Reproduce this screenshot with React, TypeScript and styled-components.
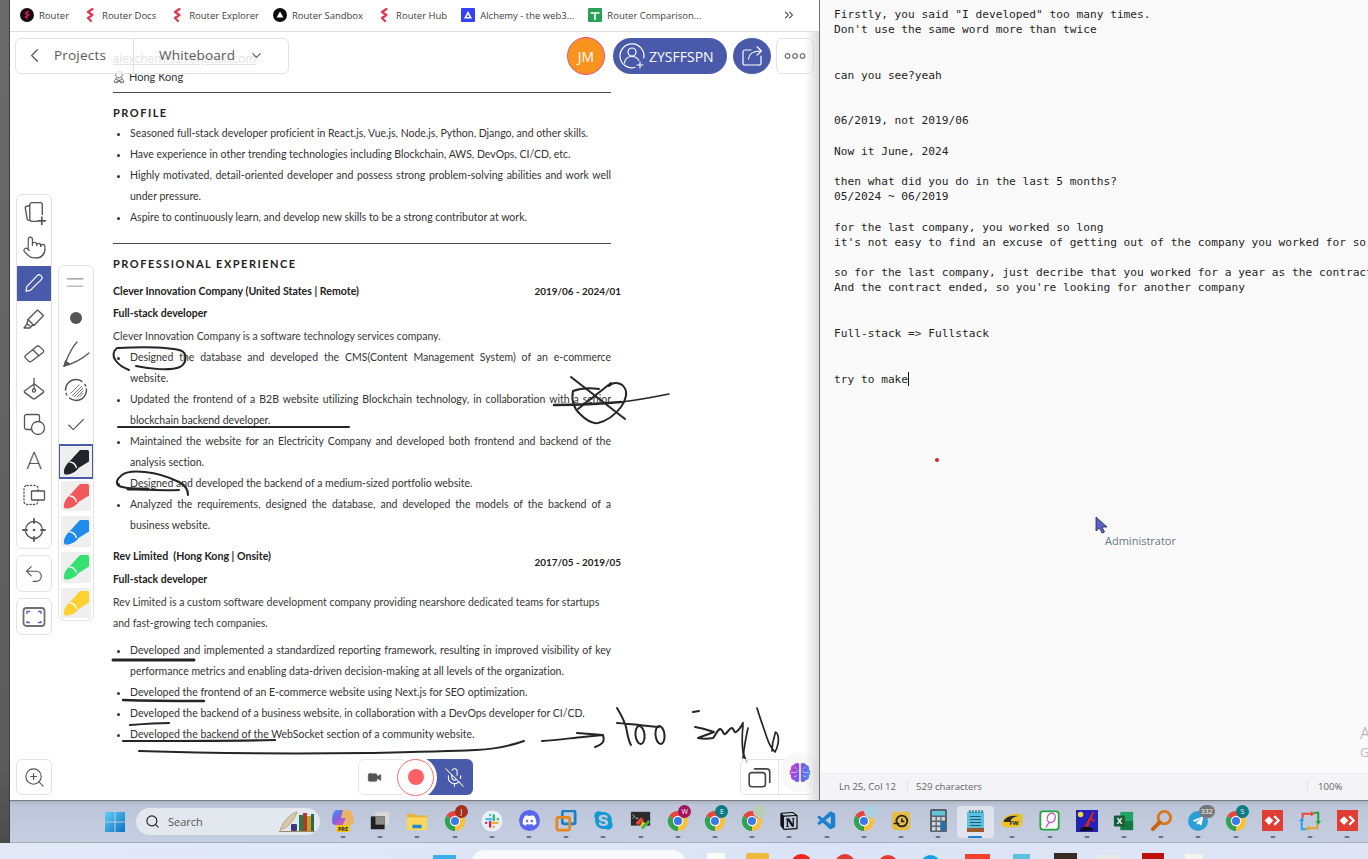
import React from 'react';
import styled, { createGlobalStyle } from 'styled-components';
import { ChevronLeft, ChevronDown, Pointer, Undo2, ZoomIn, Check, Search as SearchGlyph, ChevronsRight, Video, MicOff } from 'lucide-react';
import { FaDiscord, FaSkype, FaTelegramPlane } from 'react-icons/fa';
import { SiNotion } from 'react-icons/si';
import { VscVscode } from 'react-icons/vsc';

const Global = createGlobalStyle`
  html, body { margin: 0; padding: 0; width: 1368px; height: 859px; overflow: hidden; background: #dfe7f6; }
  * { box-sizing: border-box; }
`;

const Page = styled.div`
  width: 1368px; height: 859px; display: flex; flex-direction: column; overflow: hidden;
  font-family: 'Open Sans', 'Liberation Sans', sans-serif;
`;
const Desk = styled.div`display: flex; height: 843px;`;
const SideStrip = styled.div`
  width: 10px; background: linear-gradient(180deg, #6a6a6a, #5c5c5c 90%, #4c4c4c);
  border-right: 1px solid #3d3d3d;
`;
const DeskMain = styled.div`flex: 1; display: flex; flex-direction: column; min-width: 0;`;
const Windows = styled.div`display: flex; height: 801px; border-bottom: 1.5px solid #7b7b7b;`;

/* browser */
const Browser = styled.div`width: 810px; display: flex; flex-direction: column; background: #fff; border-right: 1px solid #6f6f6f;`;
const Bookmarks = styled.div`
  height: 32px; display: flex; align-items: center; gap: 14px; padding: 0 23px 1px 10px;
  border-bottom: 1px solid #dcdcdc; background: #fff; flex: none;
`;
const Bookmark = styled.div`
  display: flex; align-items: center; gap: 5px; font-size: 9.5px; color: #3d3d3d; white-space: nowrap;
`;
const BookmarkOverflow = styled.div`margin-left: auto; display: flex; color: #333;`;

const Canvas = styled.div`
  position: relative; flex: 1; overflow: hidden; background: #fff;
  &::after {
    content: ''; position: absolute; right: 0; top: 0; bottom: 0; width: 14px;
    background: linear-gradient(90deg, rgba(180,180,180,0), rgba(170,170,170,.42));
    pointer-events: none;
  }
`;
const Doc = styled.div`
  width: 508px; margin-left: 103px; padding-top: 18px; color: #2f2f2f;
  font-family: Lato, 'Liberation Sans', sans-serif; font-size: 10.5px; font-variant-ligatures: none;
`;
const ContactLink = styled.div`height: 18px; line-height: 18px; color: #6b7280; text-decoration: underline; font-size: 12.5px;`;
const ContactPlace = styled.div`height: 18px; line-height: 18px; display: flex; align-items: center; gap: 4px; font-size: 11px; color: #333; svg { flex: none; }`;
const Rule = styled.div<{ $top: number }>`width: 498px; height: 1px; background: #4c4c4c; margin-top: ${p => p.$top}px;`;
const Heading = styled.div<{ $top: number }>`
  height: 20px; line-height: 20px; margin-top: ${p => p.$top}px; font-weight: 700; font-size: 11px;
  letter-spacing: 1.5px; color: #222;
`;
const JobRow = styled.div<{ $top: number }>`
  display: flex; justify-content: space-between; height: 20px; line-height: 20px; margin-top: ${p => p.$top}px;
  font-weight: 700; color: #222; font-size: 10.6px;
`;
const JobDate = styled.span<{ $drop?: number }>`margin-top: ${p => p.$drop || 0}px; font-size: 9.9px;`;
const Role = styled.div<{ $top: number }>`height: 20px; line-height: 20px; margin-top: ${p => p.$top}px; font-weight: 700; color: #222;`;
const Para = styled.p<{ $top: number }>`margin: ${p => p.$top}px 0 0; width: 498px; line-height: 21px; color: #3a3a3a;`;
const Bullets = styled.ul<{ $top?: number }>`
  margin: ${p => p.$top || 0}px 0 0; padding: 0 0 0 17px; width: 498px; color: #333;
`;
const Bullet = styled.li`line-height: 21px; text-align: justify;`;

const InkLayer = styled.svg`position: absolute; left: 0; top: 0; width: 809px; height: 768px; pointer-events: none;`;

const NavGroup = styled.div`
  position: absolute; left: 5px; top: 6px; width: 274px; height: 36px; display: flex; align-items: center;
  background: rgba(255,255,255,.8); border: 1px solid #e3e3e3; border-radius: 6px; font-size: 13.5px; color: #5a5a5a;
`;
const NavBack = styled.div`width: 118px; height: 100%; display: flex; align-items: center; gap: 8px; padding: 0 0 2px 7px; border-right: 1px solid #dfdfdf; letter-spacing: .2px;`;
const NavBoard = styled.div`flex: 1; display: flex; align-items: center; gap: 14px; padding: 0 0 2px 25px; letter-spacing: .2px;`;

const TopRight = styled.div`position: absolute; right: 5px; top: 6px; display: flex; align-items: center; height: 36px;`;
const Avatar = styled.div`
  width: 38px; height: 38px; border-radius: 50%; background: #f7931e; border: 1.5px solid #ee4b72; color: #fff;
  display: flex; align-items: center; justify-content: center; font-size: 14px; margin-right: 8px;
`;
const InviteButton = styled.div`
  width: 114px; height: 36px; border-radius: 18px; background: #4a5aab; color: #fff; display: flex; align-items: center;
  gap: 3px; padding-left: 5px; font-size: 14px; font-weight: 500; margin-right: 6px;
`;
const ShareButton = styled.div`
  width: 38px; height: 36px; border-radius: 50%; background: #4a5aab; display: flex; align-items: center; justify-content: center; margin-right: 5px;
`;
const MoreButton = styled.div`
  width: 38px; height: 36px; border-radius: 6px; background: #fff; border: 1px solid #e3e3e3; display: flex; align-items: center; justify-content: center;
`;

const ToolColumn = styled.div`position: absolute; left: 6px; top: 162px; width: 36px; display: flex; flex-direction: column; gap: 6px;`;
const Panel = styled.div`
  display: flex; flex-direction: column; background: #fff; border: 1px solid #e3e3e3; border-radius: 6px; overflow: hidden;
`;
const ToolSlot = styled.div<{ $h?: number; $active?: boolean }>`
  height: ${p => p.$h || 35.3}px; flex: none; display: flex; align-items: center; justify-content: center;
  background: ${p => (p.$active ? '#4a5aab' : 'transparent')}; color: #555;
`;
const ToolLetter = styled.span`font-family: Lato, 'Liberation Sans', sans-serif; font-size: 24px; font-weight: 300; color: #555; line-height: 1;`;

const PenPanel = styled(Panel)`position: absolute; left: 48px; top: 233px; width: 36px; height: 356px; align-items: center;`;
const MarkerSlot = styled.div<{ $selected?: boolean }>`
  width: ${p => (p.$selected ? 36 : 30)}px; height: ${p => (p.$selected ? 35 : 30.5)}px; flex: none;
  margin: ${p => (p.$selected ? '1px 0 -3.5px' : '5.2px 0 0')}; background: #efefef; border-radius: 2px;
  border: ${p => (p.$selected ? '2px solid #4a5aab' : 'none')};
  display: flex; align-items: center; justify-content: center;
`;

const ZoomBox = styled(Panel)`
  position: absolute; left: 6px; top: 727px; width: 36px; height: 36px; align-items: center; justify-content: center; color: #555;
`;
const Recorder = styled.div`
  position: absolute; left: 348px; top: 727px; width: 115px; height: 36px; background: #fff; border: 1px solid #e8e8e8; border-radius: 6px;
  display: flex; align-items: center;
`;
const RecCam = styled.div`width: 31px; display: flex; justify-content: center; color: #555;`;
const RecButton = styled.div`
  margin-left: 7px; width: 37px; height: 37px; border-radius: 50%; border: 1.5px solid #f06f72; background: #fff; flex: none; z-index: 1;
  display: flex; align-items: center; justify-content: center; box-shadow: 0 0 0 3px #fff;
  &::after { content: ''; width: 16px; height: 16px; border-radius: 50%; background: #ff6166; }
`;
const RecMic = styled.div`
  flex: 1; height: calc(100% + 2px); margin: 0 -1px 0 -12px; padding-left: 14px; background: #4a5aab; border-radius: 0 6px 6px 0;
  display: flex; align-items: center; justify-content: center; color: #fff;
`;
const CornerBox = styled.div`
  position: absolute; left: 730px; top: 727px; width: 75px; height: 36px; border: 1px solid #e4e4e4; border-radius: 6px; background: rgba(255,255,255,.7);
  display: flex; align-items: center;
`;
const CornerWindows = styled.div`width: 38px; height: 100%; display: flex; align-items: center; justify-content: center; border-right: 1px solid #e4e4e4;`;
const BrainBubble = styled.div`
  position: absolute; left: 770px; top: 720px; width: 40px; height: 40px; border-radius: 50%; background: rgba(248,248,248,.95);
  display: flex; align-items: center; justify-content: center;
`;

/* notepad */
const Notepad = styled.div`flex: 1; position: relative; display: flex; flex-direction: column; background: #fafafa; min-width: 0; overflow: hidden;`;
const NoteText = styled.pre`
  flex: 1; margin: 0; padding: 7px 0 0 14px; font-family: 'DejaVu Sans Mono', 'Liberation Mono', monospace; font-size: 11.2px;
  line-height: 15.18px; color: #1f1f1f; white-space: pre; overflow: hidden;
`;
const Caret = styled.span`display: inline-block; width: 1px; height: 14px; background: #111; vertical-align: -3px;`;
const StatusBar = styled.div`
  height: 27px; flex: none; background: #f3f3f8; border-top: 1px solid #ececf0; display: flex; align-items: center; font-size: 9.6px; color: #666;
`;
const StatusCell = styled.div<{ $w: number; $pad: number; $grow?: boolean }>`
  width: ${p => p.$w}px; flex: ${p => (p.$grow ? 1 : 'none')}; padding-left: ${p => p.$pad}px; height: 14px; line-height: 14px;
  border-right: ${p => (p.$grow || p.$pad === 19 ? '1px solid #e2e2e8' : 'none')};
`;
const RemoteCursor = styled.div`position: absolute; left: 275px; top: 516px;`;
const RemoteLabel = styled.div`position: absolute; left: 285px; top: 533px; font-size: 11px; color: #667788;`;
const LaserDot = styled.div`position: absolute; left: 115px; top: 458px; width: 4px; height: 4px; border-radius: 50%; background: #e11d2a;`;
const Watermark = styled.div<{ $top: number; $size: number }>`position: absolute; left: 540px; top: ${p => p.$top}px; font-size: ${p => p.$size}px; color: #bdbdbd;`;

/* taskbar */
const Taskbar = styled.div`
  flex: 1; display: flex; align-items: center; padding-left: 95px; border-bottom: 1px solid #a6aebd;
  background: linear-gradient(180deg, #a9b3c4 0, #bcc6d8 10%, #c6cfe2 100%);
`;
const StartButton = styled.div`width: 20px; height: 20px; margin-right: 11px; display: flex;`;
const SearchBox = styled.div`
  position: relative; width: 184px; height: 27px; border-radius: 14px; background: #e3e7ee; display: flex; align-items: center; gap: 8px; padding-left: 9px;
  font-size: 11px; color: #555; margin-right: 4.5px; flex: none;
`;
const SearchArt = styled.div`position: absolute; right: 5px; top: 2px; display: flex;`;
const Slots = styled.div`display: flex;`;
const Slot = styled.div<{ $active?: boolean }>`
  position: relative; width: 37.2px; height: 32px; flex: none; display: flex; align-items: center; justify-content: center; border-radius: 4px; padding-bottom: 2px;
  background: ${p => (p.$active ? 'rgba(235,238,245,.7)' : 'transparent')};
  &::after {
    content: ''; position: absolute; bottom: 0; left: 50%; height: 2px; border-radius: 1px;
    width: ${p => (p.$active ? 14 : 5)}px; transform: translateX(-50%);
    background: ${p => (p.$active ? '#1f7fd1' : '#6d7480')};
  }
`;
const Badge = styled.div<{ $bg: string; $w?: number }>`
  position: absolute; left: 19px; top: -1px; min-width: ${p => p.$w || 13}px; height: 13px; border-radius: 7px; background: ${p => p.$bg};
  font-size: 7px; line-height: 13px; text-align: center; color: #fff; font-family: 'Open Sans', sans-serif;
`;
const RoundIcon = styled.span<{ $bg: string; $s: number }>`
  width: ${p => p.$s}px; height: ${p => p.$s}px; border-radius: 50%; background: ${p => p.$bg};
  display: flex; align-items: center; justify-content: center;
`;

/* second screen */
const SecondScreen = styled.div`flex: 1; display: flex; overflow: hidden; background: linear-gradient(90deg, #e3e9f7, #dbe4f6 60%, #dfe5f5);`;
const Peek = styled.div<{ $left: number; $w: number; $top: number; $bg: string; $round?: string }>`
  flex: none; margin-left: ${p => p.$left}px; margin-top: ${p => p.$top}px; width: ${p => p.$w}px; height: 20px;
  background: ${p => p.$bg}; border-radius: ${p => p.$round || '0'};
`;

/* ---------- drawings ---------- */
const Stroke = { fill: 'none', stroke: '#555', strokeWidth: 1.3, strokeLinecap: 'round', strokeLinejoin: 'round' } as const;

const Ic: React.FC<{ s?: number; vb?: string; children: React.ReactNode }> = ({ s = 24, vb = '0 0 24 24', children }) => (
  <svg width={s} height={s} viewBox={vb}>{children}</svg>
);

const RouterMark = ({ c = '#e0384f', s = 14 }: { c?: string; s?: number }) => (
  <svg width={s} height={s} viewBox="0 0 14 14"><path d="M9.5 1 5 4l4.5 3L5 10l3 3" fill="none" stroke={c} strokeWidth="2.2" strokeLinejoin="round" strokeLinecap="round" /></svg>
);
const RouterRound = () => (
  <svg width="14" height="14" viewBox="0 0 14 14"><circle cx="7" cy="7" r="7" fill="#1a0a16" /><path d="M8.5 3.2 5.8 5.2l2.7 1.8-2.7 1.800 1.600 1.600" fill="none" stroke="#d61f55" strokeWidth="1.6" /></svg>
);
const SandboxMark = () => (
  <svg width="14" height="14" viewBox="0 0 14 14"><circle cx="7" cy="7" r="7" fill="#0c0c0c" /><path d="M7 3.6 10.4 9.6H3.6Z" fill="#fff" /></svg>
);
const AlchemyMark = () => (
  <svg width="14" height="14" viewBox="0 0 14 14"><rect width="14" height="14" rx="1" fill="#363ff9" /><path d="M7 3 11 10.5H3Z M7 6.2 5.6 9h2.8Z" fill="#fff" fillRule="evenodd" /></svg>
);
const SheetMark = () => (
  <svg width="14" height="14" viewBox="0 0 14 14"><rect width="14" height="14" rx="1" fill="#2c9f56" /><path d="M2.5 5h9M7 5v7" stroke="#fff" strokeWidth="1.6" /></svg>
);

const CopyPlus = () => (
  <Ic s={25}>
    <path {...Stroke} d="M7 5.500 4.600 6a1.800 1.800 0 0 0-1.400 2.100l1.700 10a1.800 1.800 0 0 0 2 1.400" />
    <path {...Stroke} d="M15 20.500H9.500a2 2 0 0 1-2-2V4.500a2 2 0 0 1 2-2h8a2 2 0 0 1 2 2V14" />
    <path {...Stroke} strokeWidth="1.600" d="M19 16.500v7M15.500 20h7" />
  </Ic>
);
const PenIcon = () => (
  <Ic s={22}><path fill="none" stroke="#fff" strokeWidth="1.3" strokeLinejoin="round" d="m3.200 20.800.9-4.800L15.800 3.600a2.400 2.400 0 0 1 3.400 0l1 1a2.400 2.400 0 0 1 0 3.400L8 20Z" /></Ic>
);
const HighlighterIcon = () => (
  <Ic s={24}>
    <path {...Stroke} d="M15.500 3 21.500 8.500 12 18.500 6 12.500Z" />
    <path {...Stroke} d="M6 12.500 5 17l-3 4h6l2-2.500 2-.5" />
    <path {...Stroke} d="M5 17l3 2" />
  </Ic>
);
const EraserIcon = () => (
  <Ic s={24}>
    <path {...Stroke} d="M14 5 3.500 13.500a1.800 1.800 0 0 0 0 2.600l3.200 3a2.200 2.200 0 0 0 2.800.2L21 10.500a1.800 1.800 0 0 0 .1-2.600l-3.200-3a2.800 2.800 0 0 0-3.900 0Z" />
    <path {...Stroke} d="m10.800 7.800 6 6" />
  </Ic>
);
const FillIcon = () => (
  <Ic s={24}>
    <path {...Stroke} d="M12 8 2.500 15a1 1 0 0 0 0 1.400L11 22.600a1.600 1.600 0 0 0 2 0l8.500-6.200a1 1 0 0 0 0-1.400L12.500 8Z" transform="translate(0 -1)" />
    <path {...Stroke} d="M12 1.500V12" /><circle {...Stroke} cx="12" cy="13.500" r="1.600" />
  </Ic>
);
const ShapesIcon = () => (
  <Ic s={24}>
    <rect {...Stroke} x="2.500" y="2.500" width="15" height="15" rx="2" />
    <circle {...Stroke} fill="#fff" cx="16" cy="16" r="6.500" />
  </Ic>
);
const SelectIcon = () => (
  <Ic s={24}>
    <rect {...Stroke} strokeDasharray="1.200 2.200" x="2" y="2.500" width="14" height="19" rx="3" />
    <rect {...Stroke} fill="#fff" x="9.500" y="8" width="13" height="9" rx="0.500" />
  </Ic>
);
const LaserIcon = () => (
  <Ic s={24}>
    <circle {...Stroke} cx="12" cy="12" r="8.500" />
    <circle cx="12" cy="12" r="1.300" fill="#555" />
    <path {...Stroke} strokeWidth="1.800" d="M12 1v4M12 19v4M1 12h4M19 12h4" />
  </Ic>
);
const FitIcon = () => (
  <Ic s={24}>
    <rect fill="none" stroke="#6f6f6f" strokeWidth="1.800" x="1.500" y="3" width="21" height="18" rx="3" />
    <path fill="none" stroke="#5566b0" strokeWidth="1.300" d="M5 9V6.500h3M16 6.500h3V9M5 16v1.500h3M16 17.500h3V16" />
  </Ic>
);
const LinesIcon = () => (
  <Ic s={22}><path stroke="#666" strokeWidth="1" d="M2 7.500h18" /><path stroke="#bbb" strokeWidth="1.600" d="M2 15.500h18" /></Ic>
);
const CurveIcon = () => (
  <Ic s={28} vb="0 0 28 28">
    <path fill="none" stroke="#555" strokeWidth="1.300" strokeLinecap="round" d="M2 26C6 16 9 8 15 2" />
    <path fill="none" stroke="#555" strokeWidth="1.300" strokeLinecap="round" d="M2 26c8-2 18-7 25-13" />
    <path fill="#555" d="M1.500 27 3 20l5 3.500Z" />
  </Ic>
);
const HatchIcon = () => (
  <Ic s={24}>
    <circle cx="12" cy="12" r="10.500" fill="none" stroke="#555" strokeWidth="1.400" strokeDasharray="24 3 3 2" />
    <path stroke="#777" strokeWidth="1" d="M8 18 18 8M10 19 19 10M12.500 19.500l7-7M15 19.500l4.500-4.500M6.500 15.500 15.500 6.500" />
  </Ic>
);
const Marker = ({ c, s = 30 }: { c: string; s?: number }) => (
  <svg width={s} height={s} viewBox="0 0 30 30">
    <path fill={c} d="M3 26c-.6-4 2-8.500 5.500-11.500L19 3h7.500a1.500 1.500 0 0 1 1.500 1.500v10L17.500 21c-3 4.500-9 7-12.500 6.500-1 0-1.800-.5-2-1.500Z" />
    <path fill="none" stroke="#fff" strokeWidth="1.300" d="M8.500 15c3.500 0 6 2.500 7 6" />
  </svg>
);
const InviteIcon = () => (
  <Ic s={28} vb="0 0 28 28">
    <g fill="none" stroke="#fff" strokeWidth="1.200" strokeLinecap="round">
      <path d="M17 25.500A12 12 0 1 1 25.800 16" />
      <circle cx="14" cy="10" r="4" />
      <path d="M6.500 21c.5-4 3.500-6.500 7.500-6.500 3 0 5.500 1.500 6.800 4" />
      <path d="M22 20v6M19 23h6" />
    </g>
  </Ic>
);
const ShareIcon = () => (
  <Ic s={24}>
    <g fill="none" stroke="#fff" strokeWidth="1.200" strokeLinecap="round" strokeLinejoin="round">
      <path d="M11 6H5a2 2 0 0 0-2 2v11a2 2 0 0 0 2 2h14a2 2 0 0 0 2-2v-7" />
      <path d="M8.500 15c.5-5 4-8 12-8" /><path d="m17 2.800 4.500 4.200-4.500 4" />
    </g>
  </Ic>
);
const DotsIcon = () => (
  <svg width="24" height="8" viewBox="0 0 24 8"><g fill="none" stroke="#777" strokeWidth="1.300"><circle cx="4.500" cy="4" r="2.300" /><circle cx="12" cy="4" r="2.300" /><circle cx="19.500" cy="4" r="2.300" /></g></svg>
);
const PinIcon = () => (
  <svg width="12" height="14" viewBox="0 0 12 14"><g fill="none" stroke="#555" strokeWidth=".8"><circle cx="6" cy="4.500" r="3.500" /><path d="M3 8 1 12l3 1 2-2 2 2 3-1-2-4" /><path d="M3 9l6 3M9 9l-6 3" /></g></svg>
);
const WindowsStack = () => (
  <Ic s={26}>
    <rect fill="none" stroke="#444" strokeWidth="1.500" x="2" y="8" width="15" height="13" rx="2.500" />
    <path fill="none" stroke="#444" strokeWidth="1.500" strokeLinecap="round" d="M7 4.500h11a3 3 0 0 1 3 3V17" />
  </Ic>
);
const BrainIcon = () => (
  <svg width="22" height="21" viewBox="0 0 22 21">
    <defs><linearGradient id="brainFill" x1="0" y1="0" x2="1" y2="0.300"><stop offset="0" stopColor="#d946c8" /><stop offset=".45" stopColor="#8a4ce8" /><stop offset="1" stopColor="#4d7df0" /></linearGradient></defs>
    <path fill="url(#brainFill)" d="M10.200 1.500C8 .300 5.500 1 4.700 3 2.500 3.300 1.200 5.500 2 7.500.300 9 .300 12 2 13.500c-.500 2.500 1 4.500 3.300 4.700 1.200 2 3.700 2.300 4.900 1ZM11.800 1.500c2.200-1.200 4.700-.500 5.500 1.500 2.200.3 3.500 2.500 2.700 4.500 1.700 1.500 1.700 4.500 0 6 .5 2.500-1 4.500-3.300 4.700-1.200 2-3.700 2.300-4.900 1Z" />
    <path fill="none" stroke="#fff" strokeWidth=".7" opacity=".8" d="M2 10.500h5l2-2.500M6 5l2 2M20 10.500h-5l-2-2.500M16 5l-2 2M5 15l3-1.500M17 15l-3-1.500" />
  </svg>
);

/* taskbar art */
const WinLogo = ({ s = 20 }: { s?: number }) => (
  <svg width={s} height={s} viewBox="0 0 20 20"><defs><linearGradient id="winG" x1="0" y1="0" x2="1" y2="1"><stop offset="0" stopColor="#5fd0f5" /><stop offset="1" stopColor="#0d6fc4" /></linearGradient></defs><path fill="url(#winG)" d="M0 0h9.500v9.500H0zM10.500 0H20v9.500h-9.500zM0 10.500h9.500V20H0zM10.500 10.500H20V20h-9.500z" /></svg>
);
const ChromeIcon = () => (
  <Ic s={22}>
    <path fill="#e8453c" d="M12 12 2.470 6.500A11 11 0 0 1 21.530 6.500Z" />
    <path fill="#f9c23c" d="M12 12 21.530 6.500A11 11 0 0 1 12 23Z" />
    <path fill="#2fa350" d="M12 12 12 23A11 11 0 0 1 2.470 6.500Z" />
    <circle cx="12" cy="12" r="5.600" fill="#fff" /><circle cx="12" cy="12" r="4.400" fill="#3b78e7" />
  </Ic>
);
const CopilotIcon = () => (
  <svg width="24" height="24" viewBox="0 0 24 24">
    <defs><linearGradient id="copG" x1="0" y1="0" x2="1" y2="1"><stop offset="0" stopColor="#2aa3e8" /><stop offset=".5" stopColor="#8a5be0" /><stop offset="1" stopColor="#f0609a" /></linearGradient></defs>
    <path fill="url(#copG)" d="M6 1h6l-2 8 5 0-3 7H5a4 4 0 0 1-4-4c0-5 1-11 5-11Z" /><path fill="#f3b04a" d="M12 1h5c3 0 5 4 6 11a4 4 0 0 1-4 4h-6l3-7h-5Z" opacity=".85" />
    <rect x="5" y="16" width="14" height="7" rx="1.500" fill="#f5c518" /><text x="12" y="21.700" fontSize="5.500" fontWeight="700" fontFamily="Open Sans" textAnchor="middle" fill="#222">PRE</text>
  </svg>
);
const TaskView = () => (
  <Ic s={22}><rect x="7" y="2" width="15" height="14" fill="#d8d8d8" /><rect x="2" y="7" width="15" height="14" fill="#1f1f1f" /><rect x="7" y="7" width="10" height="9" fill="#8a8a8a" /></Ic>
);
const FolderIcon = () => (
  <Ic s={22}><path fill="#e8b23a" d="M1 4h8l2 2h12v5H1Z" /><path fill="#fbd75b" d="M1 8h22v14H1Z" /><rect x="7" y="16" width="10" height="4" rx="1" fill="#1f88d8" /></Ic>
);
const SlackIcon = () => (
  <Ic s={22}>
    <circle cx="12" cy="12" r="11.500" fill="#eceff4" />
    <g strokeWidth="2.600" strokeLinecap="round"><path stroke="#36c5f0" d="M6 10h5M10 5.500v.1" /><path stroke="#2eb67d" d="M14 6v5M18.500 10h-.1" /><path stroke="#ecb22e" d="M18 14h-5M14 18.500v-.1" /><path stroke="#e01e5a" d="M10 18v-5M5.500 14h.1" /></g>
  </Ic>
);
const BoxesIcon = () => (
  <Ic s={22}><rect x="8" y="1" width="14" height="14" rx="2" fill="none" stroke="#1b7fc4" strokeWidth="3" /><rect x="2" y="8" width="14" height="14" rx="2" fill="none" stroke="#e8861d" strokeWidth="3" /></Ic>
);
const TerminalIcon = () => (
  <Ic s={22}><rect x="1" y="2" width="21" height="15" fill="#2b2b2b" /><path stroke="#ddd" strokeWidth="1" fill="none" d="m3 5 2 2-2 2M6 9h3" /><path fill="#e8453c" d="m6 14 6-6 3 3-6 6Z" /><path fill="#f5c518" d="m11 17 3-5 3 3-3 4Z" /><path fill="#46b04a" d="m12 19 8-8 2 2-8 8Z" /></Ic>
);
const RingIcon = () => (
  <Ic s={20}><rect x="1" y="1" width="22" height="22" rx="4" fill="#e6bd42" /><circle cx="13" cy="12" r="6.500" fill="none" stroke="#222" strokeWidth="2.200" /><path stroke="#222" strokeWidth="2" d="M3 15h7M13 9v3.500h3" fill="none" /></Ic>
);
const CalcIcon = () => (
  <svg width="17" height="23" viewBox="0 0 17 23"><rect width="17" height="23" rx="1.500" fill="#59636e" /><rect x="2" y="2" width="13" height="4.500" fill="#63c4d8" /><g fill="#cfd6dc"><rect x="2" y="8" width="3.500" height="3.500" /><rect x="6.800" y="8" width="3.500" height="3.500" /><rect x="11.500" y="8" width="3.500" height="3.500" /><rect x="2" y="13" width="3.500" height="3.500" /><rect x="6.800" y="13" width="3.500" height="3.500" /><rect x="2" y="18" width="3.500" height="3.500" /><rect x="6.800" y="18" width="3.500" height="3.500" /></g><rect x="11.500" y="13" width="3.500" height="8.500" fill="#1673c4" /></svg>
);
const NotepadIcon = () => (
  <svg width="17" height="22" viewBox="0 0 17 22"><rect y="1.500" width="17" height="20" rx="1" fill="#5cc0de" /><rect y="18" width="17" height="4" fill="#9a5a2e" /><path stroke="#245d78" strokeWidth="1" d="M3 6.500h11M3 9.500h11M3 12.500h11M3 15.500h11" /><path stroke="#1d6e8e" strokeWidth="1.200" d="M3 0v3M6 0v3M9 0v3M12 0v3M15 0v3" /></svg>
);
const FwIcon = () => (
  <svg width="22" height="18" viewBox="0 0 22 18"><path fill="#e9c22c" d="M3 6c3-4 12-5 18-4 1 4 1 9-1 12-6 2-15 2-19 0-1-3 0-6 2-8Z" /><path fill="#2a2a2a" d="M3 8c3-4 9-5 14-4-5 1-7 3-8 6H3Z" /><text x="13" y="13" fontSize="6" fontWeight="700" fontFamily="Open Sans" textAnchor="middle" fill="#222">FW</text></svg>
);
const LassoIcon = () => (
  <Ic s={21}><rect x="1.500" y="1.500" width="21" height="21" rx="3" fill="#fff" stroke="#21a33a" strokeWidth="2" /><ellipse cx="14" cy="9" rx="4.500" ry="5.500" transform="rotate(20 14 9)" fill="none" stroke="#c84fc0" strokeWidth="1.500" /><path fill="none" stroke="#c84fc0" strokeWidth="1.500" d="M12 14c-2 2-3 4-4 6" /></Ic>
);
const PaintIcon = () => (
  <Ic s={22}><rect width="24" height="24" fill="#2222b8" /><circle cx="5" cy="5" r="3" fill="#f5d63c" /><path fill="#d92020" d="M8 20 16 6l2-4 2 1-3 6 4 2-1 2-4-2-3 9Z" /><path fill="#111" d="M4 22c2-4 8-5 14-2v3H4Z" /></Ic>
);
const ExcelIcon = () => (
  <Ic s={22}><path fill="#21a366" d="M8 2h14v10H8Z" /><path fill="#107c41" d="M8 12h14v10H8Z" /><rect x="1" y="6" width="12" height="12" rx="1" fill="#185c37" /><text x="7" y="15.500" fontSize="9" fontWeight="700" fontFamily="Open Sans" textAnchor="middle" fill="#fff">X</text></Ic>
);
const LensIcon = () => (
  <Ic s={23}><circle cx="15" cy="9" r="6.500" fill="none" stroke="#d9781b" strokeWidth="3" /><path stroke="#c7640f" strokeWidth="4" strokeLinecap="round" d="M10 14 3 21" /></Ic>
);
const AnyDesk = () => (
  <Ic s={21}><rect width="24" height="24" fill="#e23d33" /><path fill="#fff" d="m8 7 5 5-5 5-5-5Z" /><path fill="none" stroke="#fff" strokeWidth="2.500" d="m14 7 5 5-5 5" /></Ic>
);
const RecycleIcon = () => (
  <Ic s={22}>
    <g fill="none" strokeWidth="2.200"><path stroke="#e8453c" d="M4 9V4h10" /><path stroke="#22a33a" d="M16 3h5v10" /><path stroke="#e8a02c" d="M20 15v5H10" /><path stroke="#2c9fe8" d="M8 21H3V11" /></g>
    <path fill="#e8453c" d="m13 1 4 3-4 3Z" /><path fill="#22a33a" d="m18 12 3 4 3-4Z" /><path fill="#e8a02c" d="m11 17-4 3 4 3Z" /><path fill="#2c9fe8" d="m0 12 3-4 3 4Z" />
  </Ic>
);
const SearchBooks = () => (
  <svg width="36" height="23" viewBox="0 0 36 23">
    <path d="M1 20C5 10 11 4 18 2c-2 6-6 12-12 16Z" fill="#d8c8a8" stroke="#8a7a5a" strokeWidth=".5" />
    <rect x="12" y="14" width="6" height="7" rx="1" fill="#3a3a80" />
    <rect x="20" y="5" width="4" height="16" fill="#2a7a4a" /><rect x="24" y="3" width="4" height="18" fill="#b03a2a" /><rect x="28" y="6" width="4" height="15" fill="#c79a2a" /><rect x="32" y="4" width="3" height="17" fill="#2a6a4a" />
    <path d="M0 21.500h36" stroke="#a08a60" strokeWidth="1" />
  </svg>
);

const taskItems: { icon: React.ReactNode; badge?: { t: string; bg: string; w?: number }; active?: boolean }[] = [
  { icon: <CopilotIcon /> },
  { icon: <TaskView /> },
  { icon: <FolderIcon /> },
  { icon: <ChromeIcon />, badge: { t: 'J', bg: '#a5301e' } },
  { icon: <SlackIcon /> },
  { icon: <RoundIcon $bg="#5865f2" $s={21}><FaDiscord color="#fff" size={15} /></RoundIcon> },
  { icon: <BoxesIcon /> },
  { icon: <FaSkype color="#0f9ad6" size={21} /> },
  { icon: <TerminalIcon /> },
  { icon: <ChromeIcon />, badge: { t: 'W', bg: '#a3155e' } },
  { icon: <ChromeIcon />, badge: { t: 'E', bg: '#0c7c82' } },
  { icon: <ChromeIcon />, badge: { t: '', bg: '#b9cdb5' } },
  { icon: <SiNotion color="#111" size={18} /> },
  { icon: <VscVscode color="#1b80cf" size={22} /> },
  { icon: <ChromeIcon />, badge: { t: '', bg: '#a9cfe0' } },
  { icon: <RingIcon /> },
  { icon: <CalcIcon /> },
  { icon: <NotepadIcon />, active: true },
  { icon: <FwIcon /> },
  { icon: <LassoIcon /> },
  { icon: <PaintIcon /> },
  { icon: <ExcelIcon /> },
  { icon: <LensIcon /> },
  { icon: <RoundIcon $bg="#2c9fd8" $s={20}><FaTelegramPlane color="#fff" size={12} /></RoundIcon>, badge: { t: '332', bg: '#777', w: 16 } },
  { icon: <ChromeIcon />, badge: { t: 'S', bg: '#0c7c82' } },
  { icon: <AnyDesk /> },
  { icon: <RecycleIcon /> },
  { icon: <AnyDesk /> },
];

const noteLines = `Firstly, you said "I developed" too many times.
Don't use the same word more than twice


can you see?yeah


06/2019, not 2019/06

Now it June, 2024

then what did you do in the last 5 months?
05/2024 ~ 06/2019

for the last company, you worked so long
it's not easy to find an excuse of getting out of the company you worked for so

so for the last company, just decribe that you worked for a year as the contract
And the contract ended, so you're looking for another company


Full-stack => Fullstack


try to make`;

const peeks = [
  { left: 433, w: 23, top: 12, bg: '#3aaef0' },
  { left: 15, w: 215, top: 7, bg: '#f7f9fd', round: '14px 14px 0 0' },
  { left: 21, w: 18, top: 10, bg: '#fbfbfb' },
  { left: 21, w: 23, top: 10, bg: '#eeb93c', round: '2px 2px 0 0' },
  { left: 22, w: 21, top: 11, bg: '#f5251a', round: '11px 11px 0 0' },
  { left: 23, w: 20, top: 11, bg: '#e23b30', round: '10px 10px 0 0' },
  { left: 23, w: 20, top: 12, bg: '#e2382e', round: '10px 10px 0 0' },
  { left: 23, w: 19, top: 12, bg: '#10a4e8', round: '10px 10px 0 0' },
  { left: 25, w: 25, top: 11, bg: '#f5402f' },
  { left: 23, w: 17, top: 11, bg: '#5cc0de' },
  { left: 24, w: 23, top: 10, bg: '#3a2c22' },
  { left: 20, w: 24, top: 12, bg: '#e8e8e8' },
  { left: 21, w: 22, top: 10, bg: '#c00d0d' },
  { left: 21, w: 18, top: 11, bg: '#f6f2ee' },
];

export default function App() {
  return (
    <Page>
      <Global />
      <Desk>
        <SideStrip />
        <DeskMain>
          <Windows>
            <Browser>
              <Bookmarks>
                <Bookmark><RouterRound />Router</Bookmark>
                <Bookmark><RouterMark />Router Docs</Bookmark>
                <Bookmark><RouterMark />Router Explorer</Bookmark>
                <Bookmark><SandboxMark />Router Sandbox</Bookmark>
                <Bookmark><RouterMark />Router Hub</Bookmark>
                <Bookmark><AlchemyMark />Alchemy - the web3...</Bookmark>
                <Bookmark><SheetMark />Router Comparison...</Bookmark>
                <BookmarkOverflow><ChevronsRight size={14} strokeWidth={1.800} /></BookmarkOverflow>
              </Bookmarks>
              <Canvas>
                <Doc>
                  <ContactLink>alexchen9527@gmail.com</ContactLink>
                  <ContactPlace><PinIcon />Hong Kong</ContactPlace>
                  <Rule $top={6} />
                  <Heading $top={10}>PROFILE</Heading>
                  <Bullets>
                    <Bullet>Seasoned full-stack developer proficient in React.js, Vue.js, Node.js, Python, Django, and other skills.</Bullet>
                    <Bullet>Have experience in other trending technologies including Blockchain, AWS, DevOps, CI/CD, etc.</Bullet>
                    <Bullet>Highly motivated, detail-oriented developer and possess strong problem-solving abilities and work well under pressure.</Bullet>
                    <Bullet>Aspire to continuously learn, and develop new skills to be a strong contributor at work.</Bullet>
                  </Bullets>
                  <Rule $top={15} />
                  <Heading $top={10}>PROFESSIONAL EXPERIENCE</Heading>
                  <JobRow $top={7}><span>Clever Innovation Company (United States | Remote)</span><JobDate>2019/06 - 2024/01</JobDate></JobRow>
                  <Role $top={2}>Full-stack developer</Role>
                  <Para $top={3}>Clever Innovation Company is a software technology services company.</Para>
                  <Bullets>
                    <Bullet>Designed the database and developed the CMS(Content Management System) of an e-commerce website.</Bullet>
                    <Bullet>Updated the frontend of a B2B website utilizing Blockchain technology, in collaboration with a senior blockchain backend developer.</Bullet>
                    <Bullet>Maintained the website for an Electricity Company and developed both frontend and backend of the analysis section.</Bullet>
                    <Bullet>Designed and developed the backend of a medium-sized portfolio website.</Bullet>
                    <Bullet>Analyzed the requirements, designed the database, and developed the models of the backend of a business website.</Bullet>
                  </Bullets>
                  <JobRow $top={10}><span>Rev Limited&nbsp; (Hong Kong | Onsite)</span><JobDate $drop={6}>2017/05 - 2019/05</JobDate></JobRow>
                  <Role $top={3}>Full-stack developer</Role>
                  <Para $top={3}>Rev Limited is a custom software development company providing nearshore dedicated teams for startups and fast-growing tech companies.</Para>
                  <Bullets $top={6}>
                    <Bullet>Developed and implemented a standardized reporting framework, resulting in improved visibility of key performance metrics and enabling data-driven decision-making at all levels of the organization.</Bullet>
                    <Bullet>Developed the frontend of an E-commerce website using Next.js for SEO optimization.</Bullet>
                    <Bullet>Developed the backend of a business website, in collaboration with a DevOps developer for CI/CD.</Bullet>
                    <Bullet>Developed the backend of the WebSocket section of a community website.</Bullet>
                  </Bullets>
                </Doc>

                <InkLayer viewBox="10 32 809 768">
                  <g fill="none" stroke="#252525" strokeWidth="2" strokeLinecap="round" strokeLinejoin="round">
                    <path d="M117 348c-4 3-5 8-1 13 3 4 8 7 13 9" />
                    <path d="M136 366c14 3 34 5 44 1 7-4 7-13 2-16-12-4-42-4-64-3" />
                    <path d="M571 377 625 419M611 383 578 409" />
                    <path d="M573 391c8-3 18-3 26-2M573 391c-2 9 1 18 7 23 6 6 12 10 18 9 8-2 17-8 23-16 5-7 7-15 3-20-2-3-5-4-9-4-2 0-4 1-6 3" />
                    <path d="M554 405c22 0 46-1 67-3" strokeWidth="2.400" />
                    <path d="M621 402c18-2 33-5 48-8" strokeWidth="1.500" />
                    <path d="M118 427H349" />
                    <path d="M188 495c0-5-3-10-9-13-10-5-24-9-34-10-9-1-18-1-23 3-5 4-7 8-3 11 6 3 38 5 60 4" />
                    <path d="M128 489h20" strokeWidth="3" />
                    <path d="M113 660h81" strokeWidth="3" />
                    <path d="M123 700c28 1 55 1 81 1" strokeWidth="2.400" />
                    <path d="M130 725c13-1 26-2 39-2" strokeWidth="2.200" />
                    <path d="M123 741c50 0 100 0 152-1" strokeWidth="2.200" />
                    <path d="M139 751c60 2 150 3 229 2 44-1 89-2 108-3 18-1 34-4 48-9" />
                    <path d="M542 741c15-1 30-3 41-4l20-2M577 733l26 2c1 3 1 5 0 7-2 3-5 4-8 5" />
                    <path d="M617 708c5 8 9 15 10 24 1 5 2 10 4 13M617 723c15 1 30 3 42 4" />
                    <ellipse cx="640" cy="735" rx="4.500" ry="9" transform="rotate(-6 640 735)" />
                    <ellipse cx="660" cy="735" rx="4.500" ry="9" transform="rotate(-6 660 735)" />
                    <path d="M693 712l6-1M695 727c7 1 13 3 19 5-5 2-11 4-16 6 5 1 10 1 15 0 3-3 4-8 7-9 3 0 3 6 5 5 3-1 4-6 7-6 2 1 2 5 4 4 3-2 5-5 7-9" />
                    <path d="M743 725c-1 10-1 20 0 27 1 4 2 7 4 10" strokeWidth="1.700" />
                    <path d="M748 728c-2 9-4 20-5 30" strokeWidth="1.700" />
                    <path d="M757 708c3 10 7 21 10 30 2 6 5 11 8 14 3-5 4-12 3-16-1-4-3-5-3-2-2 6-3 11-3 17" strokeWidth="1.700" />
                  </g>
                </InkLayer>

                <NavGroup>
                  <NavBack><ChevronLeft size={23} strokeWidth={1.400} />Projects</NavBack>
                  <NavBoard>Whiteboard<ChevronDown size={15} strokeWidth={1.700} /></NavBoard>
                </NavGroup>
                <TopRight>
                  <Avatar>JM</Avatar>
                  <InviteButton><InviteIcon />ZYSFFSPN</InviteButton>
                  <ShareButton><ShareIcon /></ShareButton>
                  <MoreButton><DotsIcon /></MoreButton>
                </TopRight>

                <ToolColumn>
                  <Panel>
                    <ToolSlot><CopyPlus /></ToolSlot>
                    <ToolSlot><Pointer size={25} strokeWidth={1.100} /></ToolSlot>
                    <ToolSlot $active><PenIcon /></ToolSlot>
                    <ToolSlot><HighlighterIcon /></ToolSlot>
                    <ToolSlot><EraserIcon /></ToolSlot>
                    <ToolSlot><FillIcon /></ToolSlot>
                    <ToolSlot><ShapesIcon /></ToolSlot>
                    <ToolSlot><ToolLetter>A</ToolLetter></ToolSlot>
                    <ToolSlot><SelectIcon /></ToolSlot>
                    <ToolSlot><LaserIcon /></ToolSlot>
                  </Panel>
                  <Panel><ToolSlot><Undo2 size={22} strokeWidth={1.200} /></ToolSlot></Panel>
                  <Panel><ToolSlot $h={35}><FitIcon /></ToolSlot></Panel>
                </ToolColumn>

                <PenPanel>
                  <ToolSlot $h={34}><LinesIcon /></ToolSlot>
                  <ToolSlot $h={36}><Ic s={14} vb="0 0 14 14"><circle cx="7" cy="7" r="6" fill="#555" /></Ic></ToolSlot>
                  <ToolSlot $h={36}><CurveIcon /></ToolSlot>
                  <ToolSlot $h={35}><HatchIcon /></ToolSlot>
                  <ToolSlot $h={36}><Check size={22} strokeWidth={1.200} /></ToolSlot>
                  <MarkerSlot $selected><Marker c="#22242c" /></MarkerSlot>
                  <MarkerSlot><Marker c="#f2575a" /></MarkerSlot>
                  <MarkerSlot><Marker c="#1f8bef" /></MarkerSlot>
                  <MarkerSlot><Marker c="#35e070" /></MarkerSlot>
                  <MarkerSlot><Marker c="#fdd12f" /></MarkerSlot>
                </PenPanel>

                <ZoomBox><ZoomIn size={23} strokeWidth={1.200} /></ZoomBox>
                <Recorder>
                  <RecCam><Video size={15} fill="currentColor" strokeWidth={1} /></RecCam>
                  <RecButton />
                  <RecMic><MicOff size={21} strokeWidth={1.200} /></RecMic>
                </Recorder>
                <CornerBox><CornerWindows><WindowsStack /></CornerWindows></CornerBox>
                <BrainBubble><BrainIcon /></BrainBubble>
              </Canvas>
            </Browser>
            <Notepad>
              <NoteText>{noteLines}<Caret /></NoteText>
              <StatusBar>
                <StatusCell $w={88} $pad={19}>Ln 25, Col 12</StatusCell>
                <StatusCell $w={0} $pad={8} $grow>529 characters</StatusCell>
                <StatusCell $w={60} $pad={10}>100%</StatusCell>
              </StatusBar>
              <LaserDot />
              <RemoteCursor>
                <svg width="13" height="18" viewBox="0 0 13 18"><path d="M1 1v14l3.500-3 2.500 5 2.500-1-2.500-5H12Z" fill="#5a63c8" stroke="#23264f" strokeWidth=".8" /></svg>
              </RemoteCursor>
              <RemoteLabel>Administrator</RemoteLabel>
              <Watermark $top={722} $size={16}>A</Watermark>
              <Watermark $top={743} $size={13}>G</Watermark>
            </Notepad>
          </Windows>
          <Taskbar>
            <StartButton><WinLogo /></StartButton>
            <SearchBox>
              <SearchGlyph size={15} color="#222" strokeWidth={1.800} />Search
              <SearchArt><SearchBooks /></SearchArt>
            </SearchBox>
            <Slots>
              {taskItems.map((t, i) => (
                <Slot key={i} $active={t.active}>
                  {t.icon}
                  {t.badge && <Badge $bg={t.badge.bg} $w={t.badge.w}>{t.badge.t}</Badge>}
                </Slot>
              ))}
            </Slots>
          </Taskbar>
        </DeskMain>
      </Desk>
      <SecondScreen>
        {peeks.map((p, i) => (
          <Peek key={i} $left={p.left} $w={p.w} $top={p.top} $bg={p.bg} $round={p.round} />
        ))}
      </SecondScreen>
    </Page>
  );
}
